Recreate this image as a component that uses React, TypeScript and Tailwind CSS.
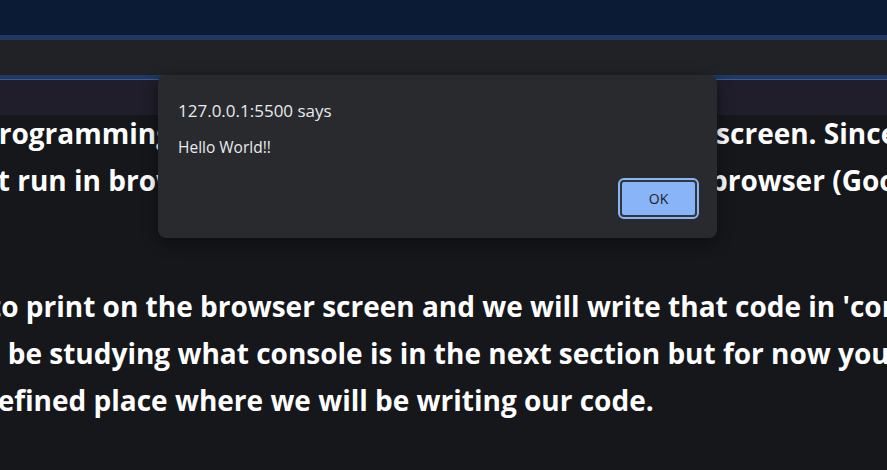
export default function App() {
  return (
    <div className="relative h-[470px] w-[887px] overflow-hidden bg-[#16171b] font-['Open_Sans',sans-serif]">
      {/* browser chrome strips */}
      <div className="h-[35px] bg-[#0b1b36]" />
      <div className="h-[5px] bg-[#1f3864]" />
      <div className="h-[35px] bg-[#212226]" />
      <div className="h-[5px] border-b border-[#3b5e94] bg-[#1f3864]" />
      <div className="h-[35px] bg-[#1f1e2a]" />

      {/* page content */}
      <div className="-mt-[5px] text-[28px] font-bold leading-[47px] text-white">
        <p className="-ml-[19px] whitespace-nowrap">
          programming language is to print Hello World in the screen. Since JavaScript
        </p>
        <p className="-ml-[62px] whitespace-nowrap">
          must run in browser, we will display the outputs in the browser (Google Chrome).
        </p>
        <p className="-ml-[11px] mt-[79px] whitespace-nowrap">
          to print on the browser screen and we will write that code in 'console'.
        </p>
        <p className="-ml-[100px] whitespace-nowrap">
          We will be studying what console is in the next section but for now you can
        </p>
        <p className="-ml-[67px] whitespace-nowrap">
          predefined place where we will be writing our code.
        </p>
      </div>

      {/* alert dialog */}
      <div className="absolute left-[158px] top-[75px] flex w-[559px] flex-col rounded-lg bg-[#292a2d] px-[20px] pb-[21px] pt-[25px] shadow-[0_4px_16px_rgba(0,0,0,0.45)]">
        <div className="text-[17px] leading-[22px] text-[#e8eaed]">127.0.0.1:5500 says</div>
        <div className="mt-[15px] text-[15.5px] leading-[20px] text-[#e8eaed]">Hello World!!</div>
        <div className="mt-[23px] flex justify-end">
          <button className="h-[37px] w-[77px] rounded-[4px] border-2 border-[#35363a] bg-[#8ab4f8] text-[14px] text-[#202124] outline-2 outline-[#8ab4f8]">
            OK
          </button>
        </div>
      </div>
    </div>
  );
}
